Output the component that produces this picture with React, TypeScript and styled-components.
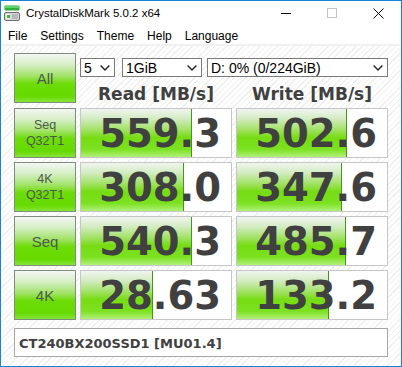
import React from 'react';
import styled, { createGlobalStyle } from 'styled-components';

const GlobalStyle = createGlobalStyle`
  html, body {
    margin: 0;
    padding: 0;
    background: #ffffff;
  }
  * {
    box-sizing: border-box;
  }
`;

const Window = styled.div`
  width: 402px;
  height: 367px;
  border: 1px solid #1883d7;
  background: #ffffff;
  display: flex;
  flex-direction: column;
  font-family: 'Liberation Sans', Arial, sans-serif;
  color: #000;
  overflow: hidden;
`;

const TitleBar = styled.div`
  height: 28px;
  display: flex;
  align-items: flex-start;
  background: #ffffff;
`;

const AppIcon = styled.svg`
  margin: 4px 0 0 3px;
  flex: none;
`;

const Title = styled.span`
  margin: 6px 0 0 6px;
  font-size: 11.5px;
  color: #000;
  flex: 1;
`;

const CaptionButton = styled.div`
  width: 46px;
  height: 24px;
  display: flex;
  align-items: center;
  justify-content: center;
`;

const MenuBar = styled.div`
  height: 15px;
  display: flex;
  padding-left: 7px;
  font-size: 12px;
  line-height: 14px;
`;

const MenuItem = styled.span`
  margin-right: 13px;
`;

const Separator = styled.div`
  height: 2px;
  background: #f0f0f0;
`;

const Client = styled.div`
  flex: 1;
  padding: 7px 12px 0 13px;
  background: repeating-linear-gradient(
    135deg,
    #ffffff 0px,
    #ffffff 3px,
    #efefef 3px,
    #efefef 4px
  );
`;

const Board = styled.div`
  display: grid;
  grid-template-columns: 62px 152px 152px;
  grid-template-rows: 51px repeat(4, 50px);
  column-gap: 4px;
  row-gap: 4px;
`;

const LabelButton = styled.div<{ $big?: boolean }>`
  height: 50px;
  border: 1px solid #7f8d7f;
  background: linear-gradient(
    to bottom,
    #f4f6f3 0%,
    #d6efc6 22%,
    #a4e36c 45%,
    #6cdc06 62%,
    #66da00 88%,
    #86e43a 100%
  );
  display: flex;
  flex-direction: column;
  align-items: center;
  justify-content: center;
  color: #4d584d;
  font-size: ${p => (p.$big ? '15px' : '12.5px')};
  line-height: 16px;
  padding-top: ${p => (p.$big ? '2px' : '0')};
`;

const Controls = styled.div`
  grid-column: 2 / span 2;
  display: flex;
  flex-direction: column;
`;

const SelectRow = styled.div`
  margin-top: 5px;
  display: flex;
`;

const Select = styled.div<{ $w: number; $gap: number }>`
  width: ${p => p.$w}px;
  margin-right: ${p => p.$gap}px;
  height: 19px;
  border: 1px solid #7a7a7a;
  background: #ffffff;
  display: flex;
  align-items: center;
  padding: 0 4px 0 3px;
  font-size: 14px;
  color: #000;
`;

const SelectText = styled.span`
  flex: 1;
  white-space: nowrap;
`;

const HeaderRow = styled.div`
  margin-top: 7px;
  display: grid;
  grid-template-columns: 152px 152px;
  column-gap: 4px;
`;

const Header = styled.div`
  text-align: center;
  font-family: 'DejaVu Sans', Verdana, sans-serif;
  font-weight: bold;
  font-size: 17px;
  color: #404040;
`;

const ResultBox = styled.div`
  position: relative;
  height: 50px;
  border: 1px solid #c6c6c6;
  background: #ffffff;
  overflow: hidden;
`;

const Meter = styled.div`
  position: absolute;
  left: 0;
  top: 0;
  bottom: 0;
  border-right: 1px solid #3f9a1c;
  background: linear-gradient(
    to bottom,
    #f1f4ef 0%,
    #d3ecc3 20%,
    #9fe160 44%,
    #76dc12 60%,
    #7ce222 84%,
    #b2f07a 100%
  );
`;

const Score = styled.div`
  position: relative;
  padding: 2px 10px 0 0;
  text-align: right;
  font-family: 'DejaVu Sans', Verdana, sans-serif;
  font-weight: bold;
  font-size: 38.5px;
  line-height: 46px;
  color: #404040;
`;

const Comment = styled.div`
  margin-top: 8px;
  width: 374px;
  height: 29px;
  border: 1px solid #a6a6a6;
  background: #ffffff;
  display: flex;
  align-items: center;
  padding: 1px 0 0 4px;
  font-family: 'DejaVu Sans', Verdana, sans-serif;
  font-weight: bold;
  font-size: 13px;
  color: #404040;
`;

const Chevron = () => (
  <svg width="10" height="6" viewBox="0 0 10 6">
    <path d="M0.6 0.6 L5 5 L9.4 0.6" fill="none" stroke="#222" strokeWidth="1.4" />
  </svg>
);

const results = [
  { label: ['Seq', 'Q32T1'], read: 559.3, write: 502.6 },
  { label: ['4K', 'Q32T1'], read: 308.0, write: 347.6 },
  { label: ['Seq'], read: 540.3, write: 485.7 },
  { label: ['4K'], read: 28.63, write: 133.2 },
];

// CrystalDiskMark draws the meter on a log scale
const meterWidth = (v: number) => Math.max(0, 28 + 30.2 * Math.log10(v));

const fmt = (v: number) => (v >= 100 ? v.toFixed(1) : v.toFixed(2));

const Cell: React.FC<{ value: number }> = ({ value }) => (
  <ResultBox>
    <Meter style={{ width: meterWidth(value) }} />
    <Score>{fmt(value)}</Score>
  </ResultBox>
);

export default function App() {
  return (
    <>
      <GlobalStyle />
      <Window>
        <TitleBar>
          <AppIcon width="16" height="16" viewBox="0 0 16 16">
            <rect x="0.5" y="0.5" width="15" height="5" rx="1" fill="#2fae3a" />
            <rect x="1" y="1" width="14" height="2" fill="#5fd46a" />
            <rect x="0.5" y="7.5" width="15" height="8" rx="1.5" fill="#d8d8d8" stroke="#6d6d6d" />
            <rect x="2" y="9" width="4" height="5" fill="#f2f2f2" />
            <rect x="3" y="10" width="3" height="3" fill="#36b83c" />
            <rect x="8" y="9" width="6" height="5" fill="#b8b8b8" />
          </AppIcon>
          <Title>CrystalDiskMark 5.0.2 x64</Title>
          <CaptionButton>
            <svg width="10" height="10" viewBox="0 0 10 10">
              <line x1="0" y1="5.5" x2="10" y2="5.5" stroke="#000" strokeWidth="1" />
            </svg>
          </CaptionButton>
          <CaptionButton>
            <svg width="10" height="10" viewBox="0 0 10 10">
              <rect x="0.5" y="0.5" width="9" height="9" fill="none" stroke="#c4c4c4" strokeWidth="1" />
            </svg>
          </CaptionButton>
          <CaptionButton>
            <svg width="11" height="11" viewBox="0 0 11 11">
              <path d="M0.5 0.5 L10.5 10.5 M10.5 0.5 L0.5 10.5" stroke="#000" strokeWidth="1" />
            </svg>
          </CaptionButton>
        </TitleBar>
        <MenuBar>
          <MenuItem>File</MenuItem>
          <MenuItem>Settings</MenuItem>
          <MenuItem>Theme</MenuItem>
          <MenuItem>Help</MenuItem>
          <MenuItem>Language</MenuItem>
        </MenuBar>
        <Separator />
        <Client>
          <Board>
            <LabelButton $big>
              <span>All</span>
            </LabelButton>
            <Controls>
              <SelectRow>
                <Select $w={35} $gap={7}>
                  <SelectText>5</SelectText>
                  <Chevron />
                </Select>
                <Select $w={80} $gap={5}>
                  <SelectText>1GiB</SelectText>
                  <Chevron />
                </Select>
                <Select $w={181} $gap={0}>
                  <SelectText>D: 0% (0/224GiB)</SelectText>
                  <Chevron />
                </Select>
              </SelectRow>
              <HeaderRow>
                <Header>Read [MB/s]</Header>
                <Header>Write [MB/s]</Header>
              </HeaderRow>
            </Controls>
            {results.map(r => (
              <React.Fragment key={r.label.join('-')}>
                <LabelButton $big={r.label.length === 1}>
                  {r.label.map(l => (
                    <span key={l}>{l}</span>
                  ))}
                </LabelButton>
                <Cell value={r.read} />
                <Cell value={r.write} />
              </React.Fragment>
            ))}
          </Board>
          <Comment>CT240BX200SSD1 [MU01.4]</Comment>
        </Client>
      </Window>
    </>
  );
}
